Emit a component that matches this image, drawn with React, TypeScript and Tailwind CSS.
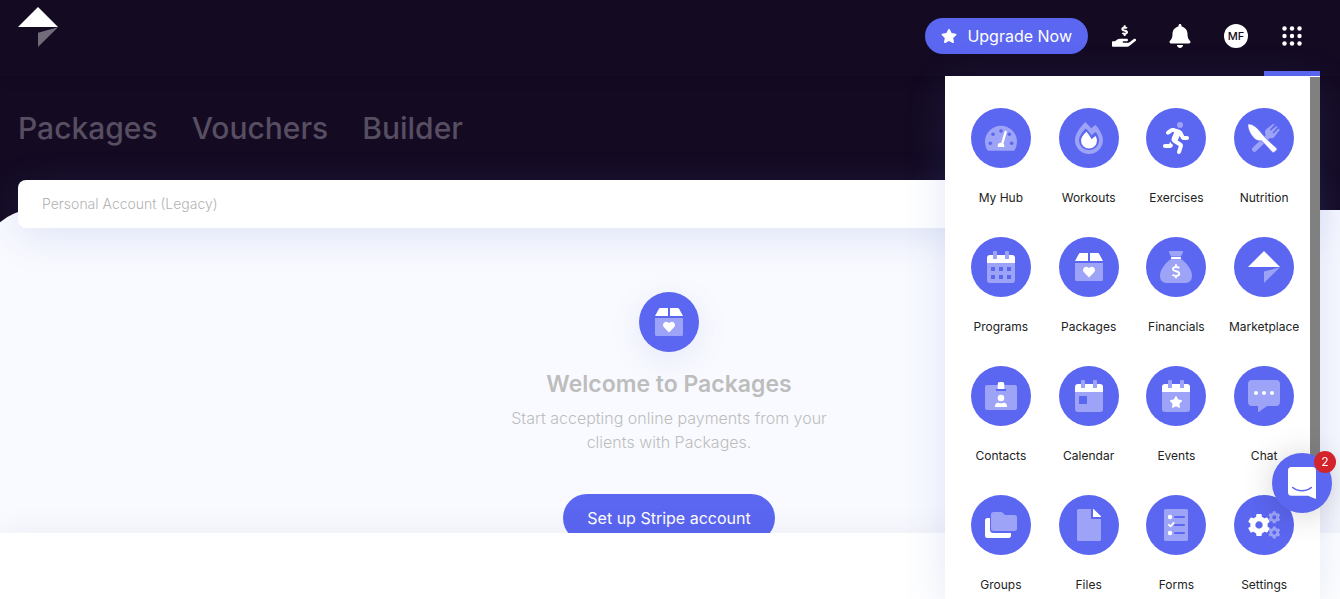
import type { ReactNode } from "react";
import { FaBell, FaHandHoldingUsd, FaHeart, FaRunning, FaStar } from "react-icons/fa";

const SOFT = "#9da3f7";
const BRAND = "#5b66f1";

function LogoMark({ className }: { className?: string }) {
  return (
    <svg viewBox="0 0 32 32" className={className} fill="#fff" aria-hidden="true">
      <path d="M0 16 16 0l16 16z" />
      <path d="M32 16.2 16 20.6V32z" opacity="0.4" />
    </svg>
  );
}

function Gear({ x, y, r, fill }: { x: number; y: number; r: number; fill: string }) {
  return (
    <g transform={`translate(${x} ${y}) scale(${r / 11})`}>
      {[0, 60, 120, 180, 240, 300].map((angle) => (
        <rect key={angle} x="-2.8" y="-11" width="5.6" height="6" rx="1" fill={fill} transform={`rotate(${angle})`} />
      ))}
      <circle r="6.2" fill="none" stroke={fill} strokeWidth="5" />
    </g>
  );
}

function CalendarBase({ children }: { children: ReactNode }) {
  return (
    <>
      <path d="M2 12h28v17a3 3 0 0 1-3 3H5a3 3 0 0 1-3-3z" fill={SOFT} />
      <path d="M2 12V7a3 3 0 0 1 3-3h22a3 3 0 0 1 3 3v5z" fill="#fff" />
      <path d="M8 1a1 1 0 0 1 1-1h2a1 1 0 0 1 1 1v7H8zM20 1a1 1 0 0 1 1-1h2a1 1 0 0 1 1 1v7h-4z" fill={SOFT} />
      {children}
    </>
  );
}

const packageIcon = (
  <>
    <path d="M2 12h28v16.500a1.500 1.500 0 0 1-1.500 1.500h-25A1.500 1.500 0 0 1 2 28.500z" fill={SOFT} />
    <path d="M7.200 2H15v8H2l3.800-7.100A1.600 1.600 0 0 1 7.200 2zM17 2h7.800a1.600 1.600 0 0 1 1.400.9L30 10H17z" fill="#fff" />
    <FaHeart x="10" y="15" size={12} color="#fff" />
  </>
);

const apps: { name: string; icon: ReactNode }[] = [
  {
    name: "My Hub",
    icon: (
      <>
        <path d="M16 3.700a16 16 0 0 0-16 16c0 3 .8 5.800 2.100 8 .4.6.9 1 1.600 1h24.600c.7 0 1.200-.4 1.600-1a16 16 0 0 0 2.100-8 16 16 0 0 0-16-16z" fill={SOFT} />
        <g fill={BRAND}>
          <circle cx="5.300" cy="21.300" r="1.800" />
          <circle cx="8" cy="12.300" r="1.800" />
          <circle cx="16" cy="9" r="1.800" />
          <circle cx="24.300" cy="12.300" r="1.800" />
          <circle cx="26.700" cy="21.300" r="1.800" />
        </g>
        <path d="M20.600 10 17.400 21" stroke="#fff" strokeWidth="2.400" strokeLinecap="round" />
        <path d="M12.700 25v-1a3.300 3.300 0 0 1 6.600 0v1z" fill="#fff" />
      </>
    ),
  },
  {
    name: "Workouts",
    icon: (
      <>
        <path d="M12.300 0c2.300 2 4.300 4.200 6 6.500 1.200-1.300 2.500-2.500 4.300-3.400C26.500 7.500 30 13.500 30 18a14 14 0 0 1-28 0C2 12.500 7 5 12.300 0z" fill={SOFT} />
        <path d="M12.900 6.500c2 2 4 4.200 5.700 7 1.200-1.300 2.400-2.600 4.200-3.500C24.600 12.500 26 16 26 18.300a10 10 0 0 1-20 0c0-3.500 3-8.300 6.900-11.800z" fill={BRAND} />
        <path d="M13.500 9.700c1.900 2.200 3.600 4.600 5.200 7.600 1.200-1.200 2.300-2.400 3.900-3.300C23.500 15.500 24 17 24 18.500a8 8 0 0 1-16 0c0-2.800 2.500-6.200 5.500-8.800z" fill="#fff" />
      </>
    ),
  },
  {
    name: "Exercises",
    icon: (
      <>
        <FaRunning size={32} color="#fff" />
        <circle cx="20" cy="3" r="3.200" fill={BRAND} />
        <circle cx="20" cy="3" r="3" fill={SOFT} />
      </>
    ),
  },
  {
    name: "Nutrition",
    icon: (
      <>
        <path d="M6.500 27.300 21 13.500" stroke={SOFT} strokeWidth="5" strokeLinecap="round" />
        <path d="m25.500 1.700 1 .9-4.800 5.200 1 1L28.300 4l1.200 1.100-4.900 5.500 1 .9 5-4.900 1.200 1.100-5.500 7.300c-1.600 1.700-4.200 1.500-6.300.3l-2.400-2.400c-1-2-.8-4.500 1-6z" fill={SOFT} />
        <path d="M.7 2C4 2 8.300 5 11 8.200l6.500 7.900 11 10a1.500 1.500 0 0 1 0 2.100L26.300 30a1.500 1.500 0 0 1-2.100 0L13.500 18.500c-2 .7-5.500.2-8-3C2 11.500-.2 6.500 0 3c0-.6.200-1 .7-1z" fill="#fff" stroke={BRAND} strokeWidth="0.500" />
      </>
    ),
  },
  {
    name: "Programs",
    icon: (
      <CalendarBase>
        <path d="M6 16h4v4H6zM14 16h4v4h-4zM22 16h4v4h-4zM6 24h4v4H6zM14 24h4v4h-4zM22 24h4v4h-4z" fill={BRAND} />
      </CalendarBase>
    ),
  },
  { name: "Packages", icon: packageIcon },
  {
    name: "Financials",
    icon: (
      <>
        <path d="M10 0h12c.9 0 1.300.8.9 1.500L21 5.500H11L9.100 1.500C8.700.8 9.100 0 10 0zM11 8h10c5.500 3.500 11 10.500 11 17 0 4-2.500 7-6.500 7h-19C2.500 32 0 29 0 25 0 18.500 5.500 11.500 11 8z" fill={SOFT} />
        <rect x="11" y="6" width="10" height="2" rx="0.500" fill="#fff" />
        <path d="M19.300 17.200c-.8-.8-2-1.200-3.300-1.200-1.800 0-3 .8-3 2.100 0 3 6.300 1.300 6.300 4.500 0 1.400-1.400 2.300-3.300 2.300-1.300 0-2.600-.4-3.500-1.200M16 13.300V16m0 8.800v2.400" fill="none" stroke="#fff" strokeWidth="1.900" />
      </>
    ),
  },
  { name: "Marketplace", icon: <LogoMark /> },
  {
    name: "Contacts",
    icon: (
      <>
        <rect y="5" width="32" height="25" rx="2" fill={SOFT} />
        <path d="M11 9h10v2H11z" fill={BRAND} />
        <path d="M12.700 9V4a2 2 0 0 1 2-2h2.600a2 2 0 0 1 2 2v5zM10 26.900v-1c0-1.800 1.300-3.200 3-3.200.7 0 1.500.6 3 .6s2.300-.6 3-.6c1.700 0 3 1.400 3 3.200v1z" fill="#fff" />
        <circle cx="16" cy="18" r="3.300" fill="#fff" />
      </>
    ),
  },
  {
    name: "Calendar",
    icon: (
      <CalendarBase>
        <rect x="6" y="16" width="8" height="8" rx="0.600" fill={BRAND} />
      </CalendarBase>
    ),
  },
  {
    name: "Events",
    icon: (
      <CalendarBase>
        <FaStar x="9.500" y="15.500" size={13} color="#fff" />
      </CalendarBase>
    ),
  },
  {
    name: "Chat",
    icon: (
      <>
        <path d="M4 0h24a4 4 0 0 1 4 4v18a4 4 0 0 1-4 4h-9l-8 5.800c-.5.400-1 .1-1-.5V26H4a4 4 0 0 1-4-4V4a4 4 0 0 1 4-4z" fill={SOFT} />
        <g fill="#fff">
          <circle cx="8" cy="13" r="2" />
          <circle cx="16" cy="13" r="2" />
          <circle cx="24" cy="13" r="2" />
        </g>
      </>
    ),
  },
  {
    name: "Groups",
    icon: (
      <>
        <path d="M5 9H2.500A2.500 2.500 0 0 0 0 11.500v15A2.500 2.500 0 0 0 2.500 29h21a2.500 2.500 0 0 0 2.500-2.500V24H8.500A3.500 3.500 0 0 1 5 20.500z" fill="#fff" />
        <path d="M8.500 3h7.600c.5 0 1 .2 1.400.6L20 6h9.500A2.500 2.500 0 0 1 32 8.500v11a2.500 2.500 0 0 1-2.500 2.500h-21A2.500 2.500 0 0 1 6 19.500v-14A2.500 2.500 0 0 1 8.500 3z" fill={SOFT} />
      </>
    ),
  },
  {
    name: "Files",
    icon: (
      <>
        <path d="M5.500 0H18v10h10v20.500a1.500 1.500 0 0 1-1.500 1.500h-21A1.500 1.500 0 0 1 4 30.500v-29A1.500 1.500 0 0 1 5.500 0z" fill={SOFT} />
        <path d="M20 0h.6l7.400 7.300V8h-8z" fill="#fff" />
      </>
    ),
  },
  {
    name: "Forms",
    icon: (
      <>
        <rect x="4" width="24" height="32" rx="1.500" fill={SOFT} />
        <path d="M15 8h9M15 16h9M15 24h9" stroke={BRAND} strokeWidth="2" strokeLinecap="round" />
        <circle cx="10" cy="8" r="2.200" fill="#fff" />
        <circle cx="10" cy="24" r="2.200" fill="#fff" />
        <path d="m8.300 15.300 2.200 2 3.700-4" fill="none" stroke="#fff" strokeWidth="1.800" />
      </>
    ),
  },
  {
    name: "Settings",
    icon: (
      <>
        <Gear x={11} y={16} r={11} fill="#fff" />
        <Gear x={26.300} y={8.300} r={6} fill={SOFT} />
        <Gear x={26.300} y={23.500} r={6} fill={SOFT} />
      </>
    ),
  },
];

function IconDisc({ children }: { children: ReactNode }) {
  return (
    <span className="flex size-15 shrink-0 items-center justify-center rounded-full bg-[#5b66f1]">
      <svg viewBox="0 0 32 32" className="size-8" aria-hidden="true">
        {children}
      </svg>
    </span>
  );
}

function AppMenu() {
  return (
    <div className="absolute top-full right-5 z-20 flex h-[calc(100vh-76px)] w-[375px] max-w-full overflow-hidden bg-white shadow-[0_8px_40px_rgba(80,110,200,0.16)]">
      <ul className="grid flex-1 grid-cols-4 content-start gap-y-[31px] pt-8 pr-0.5 pl-3">
        {apps.map((app) => (
          <li key={app.name}>
            <a href="#" className="flex flex-col items-center text-xs text-[#222222]">
              <IconDisc>{app.icon}</IconDisc>
              <span className="mt-[22px] leading-4">{app.name}</span>
            </a>
          </li>
        ))}
      </ul>
      {/* scroll track and thumb */}
      <div className="w-2.5 pt-px">
        <div className="h-4/5 bg-[#808080]" />
      </div>
    </div>
  );
}

function Header() {
  return (
    <header className="relative z-20 flex h-[76px] shrink-0 items-start justify-between bg-[#140a22] pr-5 pl-[18px] shadow-[0_2px_12px_rgba(0,0,0,0.2)]">
      <a href="#" aria-label="Home" className="mt-[7px]">
        <LogoMark className="size-10" />
      </a>
      <div className="flex h-full text-white">
        <button className="mt-[18px] mr-2 flex h-9 items-center gap-2.5 rounded-full bg-[#5b66f1] px-4 text-base">
          <FaStar className="size-4" />
          Upgrade Now
        </button>
        <button aria-label="Payments" className="flex w-14 items-center justify-center pb-1">
          <FaHandHoldingUsd className="size-6" />
        </button>
        <button aria-label="Notifications" className="flex w-14 items-center justify-center pb-1">
          <FaBell className="size-6" />
        </button>
        <button aria-label="Profile" className="flex w-14 items-center justify-center pb-1">
          <span className="flex size-6 items-center justify-center rounded-full bg-white text-[11px] font-medium text-[#140a22]">
            MF
          </span>
        </button>
        <button aria-label="Apps" aria-expanded="true" className="flex w-14 flex-col items-center">
          <svg viewBox="0 0 24 24" className="mt-6 size-6" fill="currentColor" aria-hidden="true">
            {[4.500, 12, 19.500].map((y) =>
              [4.500, 12, 19.500].map((x) => <circle key={`${x}-${y}`} cx={x} cy={y} r="2.200" />),
            )}
          </svg>
          <span className="mt-auto h-[5px] w-full bg-[#5b66f1]" />
        </button>
      </div>
      <AppMenu />
    </header>
  );
}

function ChatLauncher() {
  return (
    <button
      aria-label="Open chat, 2 unread"
      className="fixed right-2 bottom-[86px] z-30 flex size-15 items-center justify-center rounded-full bg-[#5b66f1] shadow-[0_2px_32px_rgba(0,0,0,0.18)]"
    >
      <svg viewBox="0 0 28 32" className="h-8 w-7" aria-hidden="true">
        <path d="M3.500 0h21A3.500 3.500 0 0 1 28 3.500V32s-4.500-1.600-8-3.200H3.500A3.500 3.500 0 0 1 0 25.300V3.500A3.500 3.500 0 0 1 3.500 0z" fill="#fff" />
        <path d="M4.700 20.500c5 4.300 13.600 4.300 18.600 0" fill="none" stroke={BRAND} strokeWidth="1.600" strokeLinecap="round" />
      </svg>
      <span className="absolute -top-0.5 -right-1 flex size-[22px] items-center justify-center rounded-full bg-[#d3242b] text-xs text-white">
        2
      </span>
    </button>
  );
}

export default function App() {
  return (
    <div className="flex h-screen flex-col overflow-hidden bg-white font-['Inter',sans-serif]">
      <Header />
      <main className="flex min-h-0 flex-1 flex-col overflow-hidden bg-[#140a22]">
        <nav className="flex h-[104px] shrink-0 items-center gap-[34px] px-[18px] text-[30px] font-medium text-[#574e62]">
          <a href="#">Packages</a>
          <a href="#">Vouchers</a>
          <a href="#">Builder</a>
        </nav>
        <div className="relative z-10 mr-5 ml-[18px] shrink-0">
          <select
            aria-label="Account"
            className="h-12 w-full appearance-none rounded-lg bg-white px-6 text-sm font-light text-[#b3b3b3] shadow-[0_8px_40px_rgba(80,110,200,0.16)]"
          >
            <option>Personal Account (Legacy)</option>
          </select>
        </div>
        <section className="-mt-[18px] -ml-4 flex flex-1 flex-col items-center rounded-tl-[48px] bg-[#f9faff] pt-[82px] pl-3.5 text-center">
          <div className="rounded-full shadow-[0_8px_32px_rgba(80,110,200,0.12)]">
            <IconDisc>{packageIcon}</IconDisc>
          </div>
          <h1 className="mt-4 text-[23px] leading-8 font-semibold text-[#bdbdbd]">Welcome to Packages</h1>
          <p className="mt-1.5 w-[340px] text-base font-light text-[#bdbdbd]">
            Start accepting online payments from your clients with Packages.
          </p>
          <button className="mt-10 h-12 shrink-0 rounded-full bg-[#5b66f1] px-6 text-base text-white">
            Set up Stripe account
          </button>
        </section>
      </main>
      <footer className="relative z-10 h-[66px] shrink-0 bg-white shadow-[0_-4px_30px_rgba(30,40,90,0.05)]" />
      <ChatLauncher />
    </div>
  );
}
